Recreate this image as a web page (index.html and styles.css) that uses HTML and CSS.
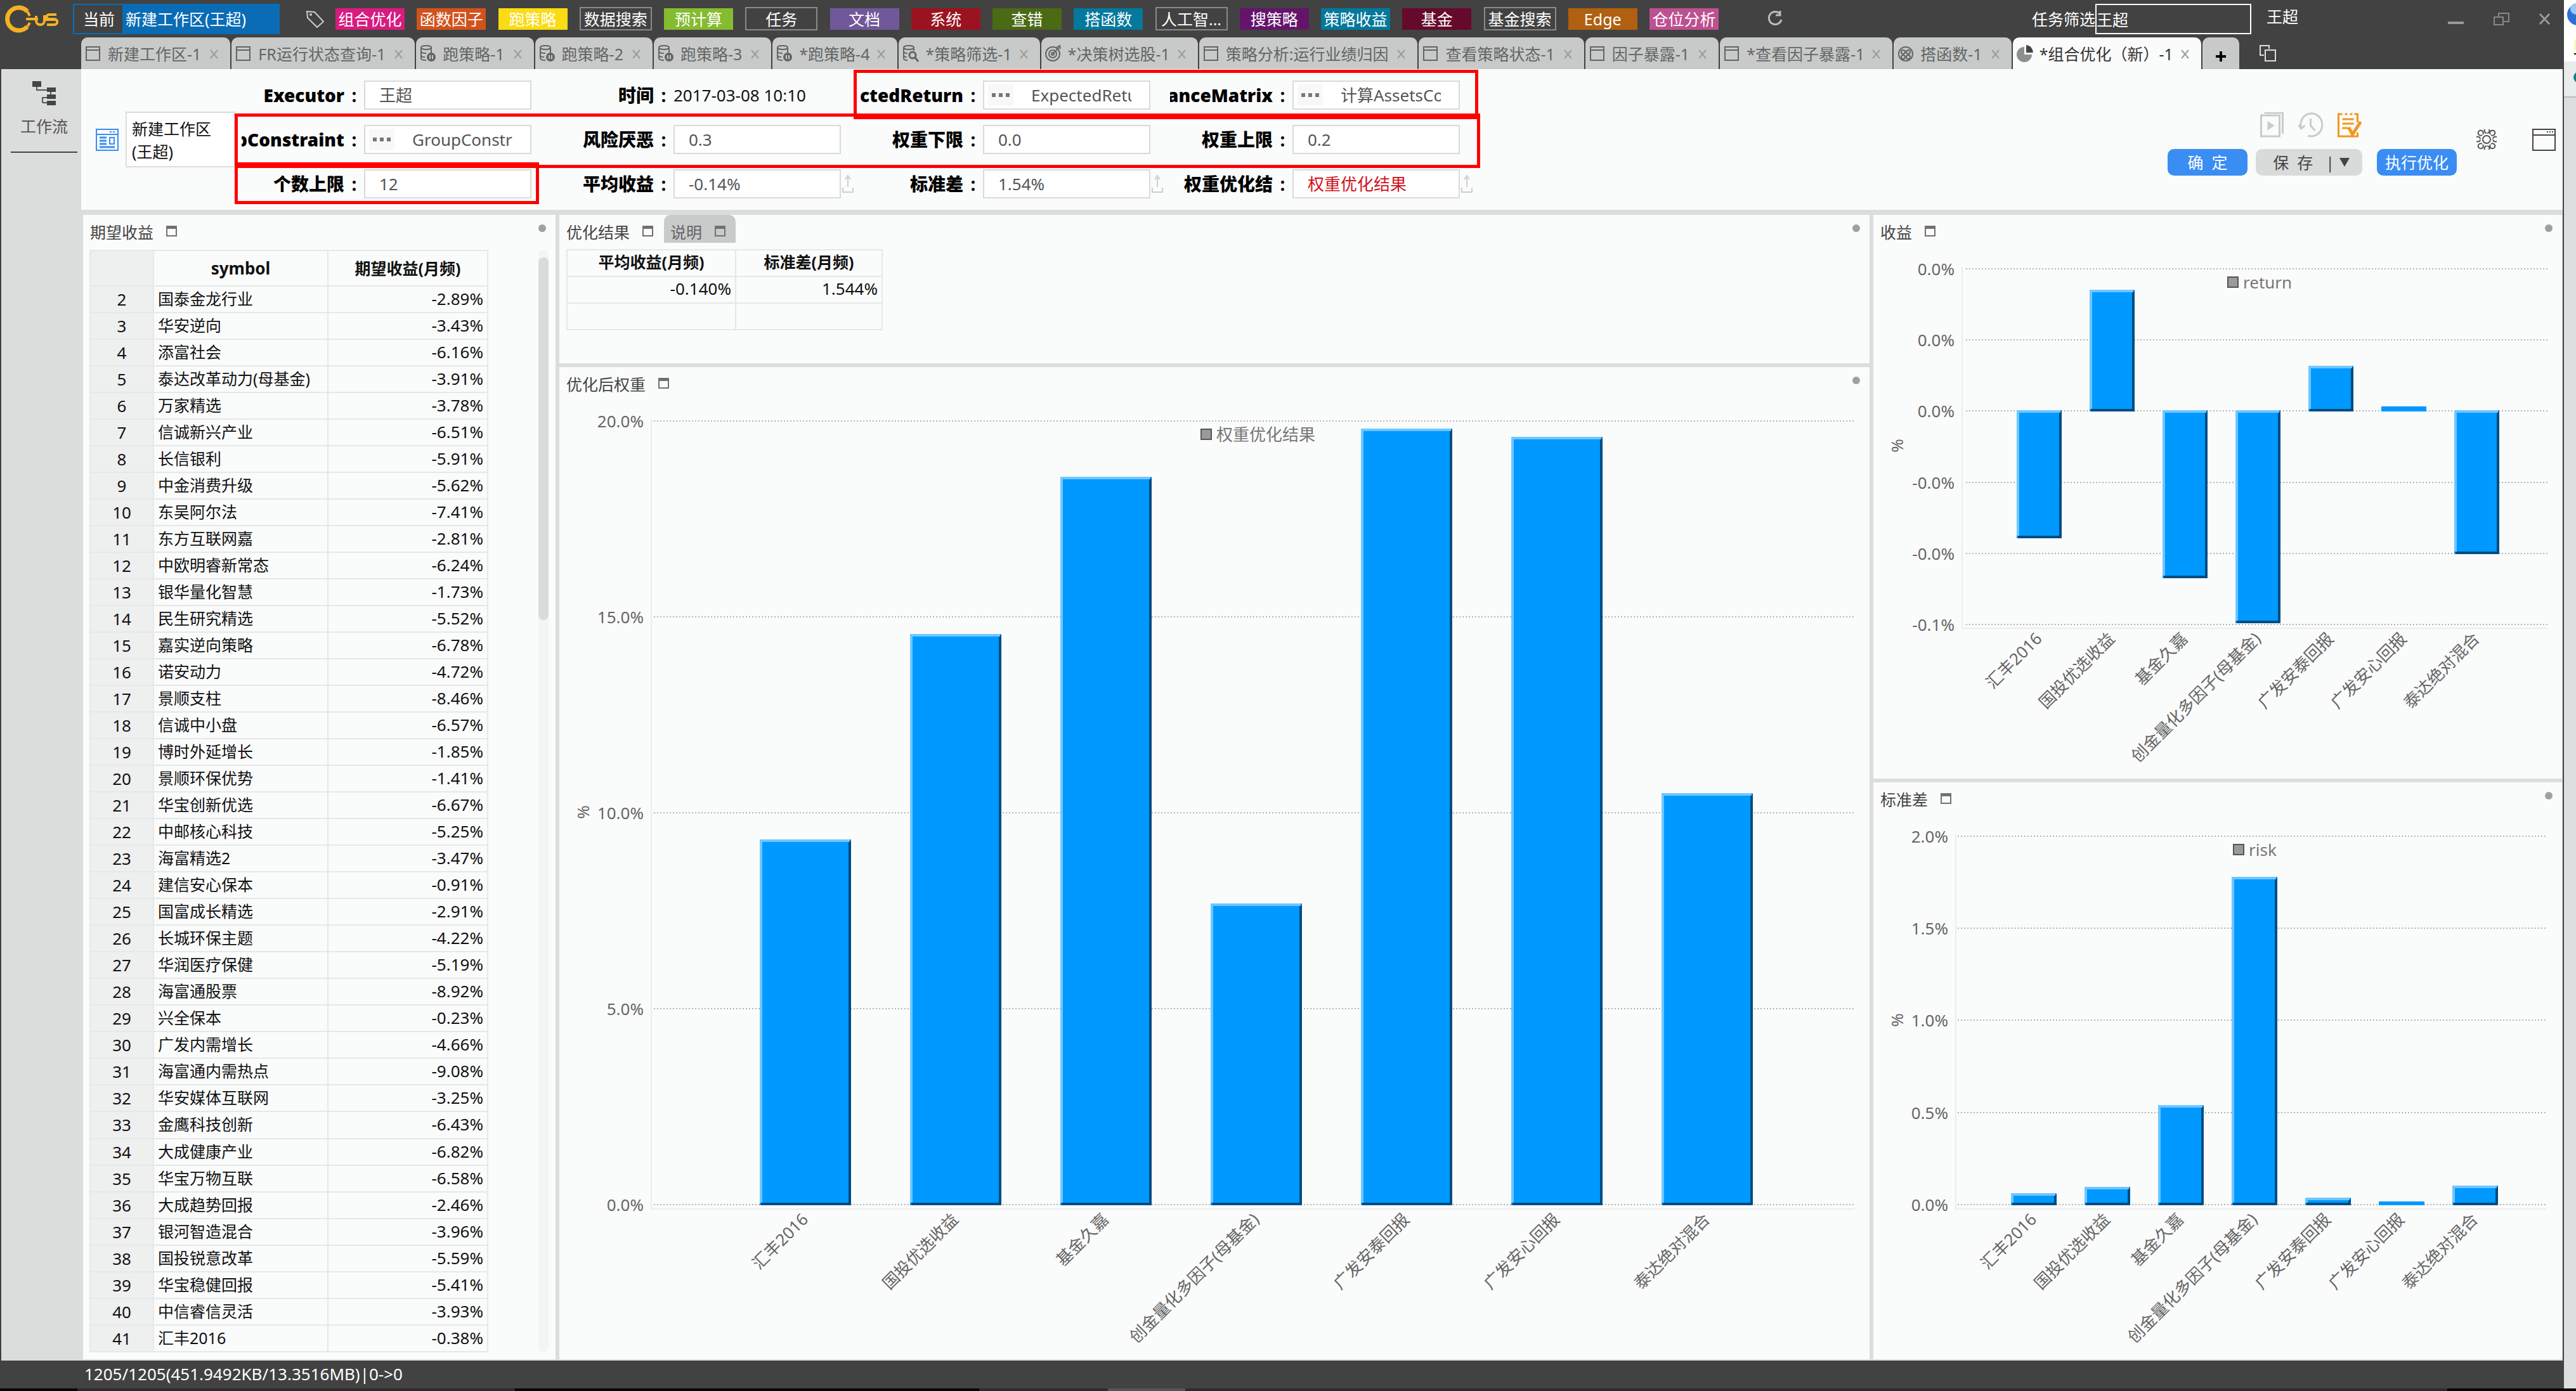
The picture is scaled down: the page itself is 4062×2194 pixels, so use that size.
FILE: index.html
```html
<!DOCTYPE html>
<html lang="zh-CN">
<head>
<meta charset="utf-8">
<title>组合优化（新）-1</title>
<link rel="stylesheet" href="styles.css">
</head>
<body>
<svg class="sprite" width="0" height="0" aria-hidden="true">
  <symbol id="i-win" viewBox="0 0 26 30"><path d="M2 4h21v21H2zM2 9h21" fill="none" stroke="currentColor" stroke-width="2"/></symbol>
  <symbol id="i-db" viewBox="0 0 26 30"><g fill="none" stroke="currentColor" stroke-width="2"><ellipse cx="10" cy="5" rx="8" ry="3"/><path d="M2 5v17c0 2 4 3 8 3M18 5v8M2 11c0 2 4 3 8 3M2 17c0 2 3 3 6 3"/></g><circle cx="18" cy="20" r="7" fill="currentColor"/><path d="M16 17v6M20 17v6" stroke="#c8cac9" stroke-width="2"/></symbol>
  <symbol id="i-find" viewBox="0 0 26 30"><g fill="none" stroke="currentColor" stroke-width="2"><ellipse cx="10" cy="5" rx="8" ry="3"/><path d="M2 5v17c0 2 3 3 6 3M18 5v5M2 11c0 2 3 3 6 3M2 17c0 2 3 3 5 3"/></g><circle cx="16" cy="17" r="5" fill="none" stroke="currentColor" stroke-width="3"/><path d="M20 21l5 6" stroke="currentColor" stroke-width="3"/></symbol>
  <symbol id="i-target" viewBox="0 0 26 30"><g fill="none" stroke="currentColor" stroke-width="2"><circle cx="12" cy="15" r="11"/><circle cx="12" cy="15" r="6"/><circle cx="12" cy="15" r="2"/><path d="M12 15l10-10M18 5l5-3 1 5"/></g></symbol>
  <symbol id="i-fx" viewBox="0 0 26 30"><g fill="none" stroke="currentColor" stroke-width="2"><circle cx="13" cy="15" r="11"/><circle cx="9" cy="12" r="3"/><circle cx="17" cy="12" r="3"/><circle cx="9" cy="20" r="3"/><circle cx="17" cy="20" r="3"/></g></symbol>
  <symbol id="i-pie" viewBox="0 0 26 30"><path d="M12 4a12 12 0 1 0 12 12H12z" fill="#8d8f8f"/><path d="M15 1a12 12 0 0 1 11 12H15z" fill="#444"/></symbol>
  <symbol id="i-x" viewBox="0 0 13 15"><path d="M1 1l11 13M12 1L1 14" stroke="currentColor" stroke-width="2"/></symbol>
  <symbol id="i-up" viewBox="0 0 18 28"><path d="M9 19V4M5 7l4-6 4 6M1 20v7h16v-7" fill="none" stroke="currentColor" stroke-width="2"/></symbol>
</svg>

<div class="desktop">
<div class="window">
  <header class="titlebar">
    <svg class="logo" viewBox="0 0 84 44" fill="none" stroke="#f4b223"><path d="M35 10A18 18 0 1 0 35 34" stroke-width="7"/><path d="M35 10L39 17M35 34L39 28M33 22H52M49 17V25C49 33 62 33 62 25V16M60 23H80M81 15H70C64 15 64 22 70 22H77C84 22 84 31 77 31H66" stroke-width="4"/></svg>
    <label class="workspace"><span class="workspace-tag">当前</span><input value="新建工作区(王超)"></label>
    <svg class="tag-icon" viewBox="0 0 30 28"><path d="M2 2l12 1 14 15-10 9L3 12z" fill="none" stroke="#ccc" stroke-width="2"/><circle cx="8" cy="7" r="2" fill="#ccc"/></svg>
    <nav class="tags">
      <button class="t-pink">组合优化</button><button class="t-orange">函数因子</button><button class="t-yellow">跑策略</button><button class="t-line">数据搜索</button><button class="t-lime">预计算</button><button class="t-line">任务</button><button class="t-violet">文档</button><button class="t-red">系统</button><button class="t-olive">查错</button><button class="t-teal">搭函数</button><button class="t-line">人工智...</button><button class="t-purple">搜策略</button><button class="t-teal">策略收益</button><button class="t-wine">基金</button><button class="t-line">基金搜索</button><button class="t-brown">Edge</button><button class="t-rose">仓位分析</button>
    </nav>
    <button class="bare refresh" aria-label="刷新"><svg width="26" height="28" viewBox="0 0 26 28"><path d="M21 6A10 10 0 1 0 23 15M21 1v7h-7" fill="none" stroke="#bbb" stroke-width="3"/></svg></button>
    <div class="filter"><label for="task">任务筛选</label><input id="task" value="王超"></div>
    <span class="user">王超</span>
    <div class="winctl">
      <button class="bare" aria-label="最小化"><svg width="27" height="20" viewBox="0 0 27 20"><path d="M1 16h25" stroke="#999" stroke-width="4"/></svg></button>
      <button class="bare" aria-label="还原"><svg width="25" height="20" viewBox="0 0 25 20"><path d="M8 7V1h16v13h-8M1 7h14v12H1z" fill="none" stroke="#888" stroke-width="2"/></svg></button>
      <button class="bare" aria-label="关闭"><svg width="19" height="18" viewBox="0 0 19 18"><path d="M2 1l15 16M17 1L2 17" stroke="#999" stroke-width="3"/></svg></button>
    </div>
  </header>

  <nav class="tabs">
    <div class="tab"><svg><use href="#i-win"/></svg><span>新建工作区-1</span><button class="bare" aria-label="关闭"><svg><use href="#i-x"/></svg></button></div>
    <div class="tab"><svg><use href="#i-win"/></svg><span>FR运行状态查询-1</span><button class="bare" aria-label="关闭"><svg><use href="#i-x"/></svg></button></div>
    <div class="tab"><svg><use href="#i-db"/></svg><span>跑策略-1</span><button class="bare" aria-label="关闭"><svg><use href="#i-x"/></svg></button></div>
    <div class="tab"><svg><use href="#i-db"/></svg><span>跑策略-2</span><button class="bare" aria-label="关闭"><svg><use href="#i-x"/></svg></button></div>
    <div class="tab"><svg><use href="#i-db"/></svg><span>跑策略-3</span><button class="bare" aria-label="关闭"><svg><use href="#i-x"/></svg></button></div>
    <div class="tab changed"><svg><use href="#i-db"/></svg><span>*跑策略-4</span><button class="bare" aria-label="关闭"><svg><use href="#i-x"/></svg></button></div>
    <div class="tab changed"><svg><use href="#i-find"/></svg><span>*策略筛选-1</span><button class="bare" aria-label="关闭"><svg><use href="#i-x"/></svg></button></div>
    <div class="tab changed"><svg><use href="#i-target"/></svg><span>*决策树选股-1</span><button class="bare" aria-label="关闭"><svg><use href="#i-x"/></svg></button></div>
    <div class="tab"><svg><use href="#i-win"/></svg><span>策略分析:运行业绩归因</span><button class="bare" aria-label="关闭"><svg><use href="#i-x"/></svg></button></div>
    <div class="tab"><svg><use href="#i-win"/></svg><span>查看策略状态-1</span><button class="bare" aria-label="关闭"><svg><use href="#i-x"/></svg></button></div>
    <div class="tab"><svg><use href="#i-win"/></svg><span>因子暴露-1</span><button class="bare" aria-label="关闭"><svg><use href="#i-x"/></svg></button></div>
    <div class="tab changed"><svg><use href="#i-win"/></svg><span>*查看因子暴露-1</span><button class="bare" aria-label="关闭"><svg><use href="#i-x"/></svg></button></div>
    <div class="tab"><svg><use href="#i-fx"/></svg><span>搭函数-1</span><button class="bare" aria-label="关闭"><svg><use href="#i-x"/></svg></button></div>
    <div class="tab active changed"><svg><use href="#i-pie"/></svg><span>*组合优化（新）-1</span><button class="bare" aria-label="关闭"><svg><use href="#i-x"/></svg></button></div>
    <button class="tab-add" aria-label="新建"><svg width="18" height="18" viewBox="0 0 18 18"><path d="M9 1v16M1 9h16" stroke="#000" stroke-width="4"/></svg></button>
    <button class="bare tab-copy" aria-label="窗口列表"><svg width="26" height="26" viewBox="0 0 26 26"><path d="M7 16H1V1h14v5M9 8h16v17H9z" fill="none" stroke="#ddd" stroke-width="2"/></svg></button>
  </nav>

  <div class="workarea">
    <aside class="sidebar">
      <button class="side-item"><svg width="38" height="40" viewBox="0 0 38 40"><path d="M7 9v6h22M29 16v9M16 35v-8h13M16 35h10" fill="none" stroke="#555" stroke-width="2"/><path d="M0 1h14v9H0zM23 11h14v7H23zM23 22h14v7H23zM23 32h14v7H23z" fill="#444"/></svg><span>工作流</span></button>
    </aside>
    <main>
      <section class="header">
        <svg class="ws-icon" viewBox="0 0 36 35" fill="none" stroke="#3a8df2" stroke-width="2"><path d="M1 1h34v33H1zM1 9h34M22 5h3M27 5h3"/><path d="M6 14h11M6 19h11M6 24h11M6 29h24" stroke-width="3"/><path d="M22 14h7v10h-7z"/></svg>
        <div class="ws-name">新建工作区<br>(王超)</div>
        <form class="params">
          <div class="cell"><label for="f1"><b>Executor</b><i>:</i></label><div class="field"><input id="f1" value="王超"></div></div>
          <div class="cell"><span class="lbl"><b>时间</b><i>:</i></span><time>2017-03-08 10:10</time></div>
          <div class="cell"><label for="f2"><b>ExpectedReturn</b><i>:</i></label><div class="field pick"><button type="button" aria-label="选择"><svg width="29" height="6" viewBox="0 0 29 6"><path d="M0 0h6v6H0zM11 0h6v6h-6zM22 0h6v6h-6z" fill="#777"/></svg></button><input id="f2" value="ExpectedReturn"></div></div>
          <div class="cell"><label for="f3"><b>CovarianceMatrix</b><i>:</i></label><div class="field pick"><button type="button" aria-label="选择"><svg width="29" height="6" viewBox="0 0 29 6"><path d="M0 0h6v6H0zM11 0h6v6h-6zM22 0h6v6h-6z" fill="#777"/></svg></button><input id="f3" value="计算AssetsCov"></div></div>
          <div class="cell"><label for="f4"><b>GroupConstraint</b><i>:</i></label><div class="field pick"><button type="button" aria-label="选择"><svg width="29" height="6" viewBox="0 0 29 6"><path d="M0 0h6v6H0zM11 0h6v6h-6zM22 0h6v6h-6z" fill="#777"/></svg></button><input id="f4" value="GroupConstraint"></div></div>
          <div class="cell"><label for="f5"><b>风险厌恶</b><i>:</i></label><div class="field"><input id="f5" value="0.3"></div></div>
          <div class="cell"><label for="f6"><b>权重下限</b><i>:</i></label><div class="field"><input id="f6" value="0.0"></div></div>
          <div class="cell"><label for="f7"><b>权重上限</b><i>:</i></label><div class="field"><input id="f7" value="0.2"></div></div>
          <div class="cell"><label for="f8"><b>个数上限</b><i>:</i></label><div class="field"><input id="f8" value="12"></div></div>
          <div class="cell"><label for="f9"><b>平均收益</b><i>:</i></label><div class="field"><input id="f9" value="-0.14%"></div><svg class="up"><use href="#i-up"/></svg></div>
          <div class="cell"><label for="f10"><b>标准差</b><i>:</i></label><div class="field"><input id="f10" value="1.54%"></div><svg class="up"><use href="#i-up"/></svg></div>
          <div class="cell"><label for="f11"><b>权重优化结</b><i>:</i></label><div class="field"><input id="f11" class="warn" value="权重优化结果"></div><svg class="up"><use href="#i-up"/></svg></div>
        </form>
        <div class="actions">
          <div class="action-icons">
            <svg viewBox="0 0 38 40" fill="none" stroke="#c9cbcb" stroke-width="3"><path d="M2 5h29v33H2zM7 1h29v33"/><path d="M12 14l11 7-11 8z" fill="#c9cbcb" stroke="none"/></svg>
            <svg viewBox="0 0 38 40" fill="none" stroke="#c9cbcb" stroke-width="3"><path d="M4 25A17 18 0 1 1 15 37M19 10v11l7 8M0 20l4 6 6-5"/></svg>
            <svg viewBox="0 0 38 40" fill="none" stroke="#f0981e" stroke-width="3"><path d="M8 3H2v35h30v-6M32 16V3h-5M12 3h4M20 3h4M8 11h18M8 18h18M8 25h9"/><path d="M18 24l6 11 13-20" stroke-width="5"/></svg>
          </div>
          <div class="action-buttons">
            <button class="primary">确&nbsp; 定</button>
            <button class="save">保&nbsp; 存<span>|</span><svg width="16" height="14" viewBox="0 0 16 14"><path d="M0 0h16L8 14z" fill="#444"/></svg></button>
            <button class="primary run">执行优化</button>
          </div>
        </div>
        <button class="bare gear" aria-label="设置"><svg width="32" height="32" viewBox="0 0 32 32" fill="none" stroke="#555" stroke-width="2"><circle cx="16" cy="16" r="6"/><path d="M16 6a4 4 0 1 1 1 0M16 26a4 4 0 1 0 1 0M6 16a4 4 0 1 1 0-1M26 16a4 4 0 1 0 0-1M9 9a4 4 0 1 1 1-1M23 9a4 4 0 1 0-1-1M9 23a4 4 0 1 0 1 1M23 23a4 4 0 1 1-1 1"/></svg></button>
        <button class="bare max" aria-label="窗口"><svg width="37" height="35" viewBox="0 0 37 35" fill="none" stroke="#444" stroke-width="2"><path d="M1 1h35v33H1zM1 10h35"/><path d="M23 5h2M27 5h2M31 5h2"/></svg></button>
        <div class="mark mark-a"></div><div class="mark mark-b"></div><div class="mark mark-c"></div>
      </section>

      <div class="panels">
        <section class="panel">
          <div class="ptitle"><span>期望收益</span><i class="mx"></i><i class="dot"></i></div>
          <div class="list">
            <table class="returns">
              <thead><tr><th></th><th>symbol</th><th>期望收益(月频)</th></tr></thead>
              <tbody>
<tr><th>2</th><td>国泰金龙行业</td><td>-2.89%</td></tr>
<tr><th>3</th><td>华安逆向</td><td>-3.43%</td></tr>
<tr><th>4</th><td>添富社会</td><td>-6.16%</td></tr>
<tr><th>5</th><td>泰达改革动力(母基金)</td><td>-3.91%</td></tr>
<tr><th>6</th><td>万家精选</td><td>-3.78%</td></tr>
<tr><th>7</th><td>信诚新兴产业</td><td>-6.51%</td></tr>
<tr><th>8</th><td>长信银利</td><td>-5.91%</td></tr>
<tr><th>9</th><td>中金消费升级</td><td>-5.62%</td></tr>
<tr><th>10</th><td>东吴阿尔法</td><td>-7.41%</td></tr>
<tr><th>11</th><td>东方互联网嘉</td><td>-2.81%</td></tr>
<tr><th>12</th><td>中欧明睿新常态</td><td>-6.24%</td></tr>
<tr><th>13</th><td>银华量化智慧</td><td>-1.73%</td></tr>
<tr><th>14</th><td>民生研究精选</td><td>-5.52%</td></tr>
<tr><th>15</th><td>嘉实逆向策略</td><td>-6.78%</td></tr>
<tr><th>16</th><td>诺安动力</td><td>-4.72%</td></tr>
<tr><th>17</th><td>景顺支柱</td><td>-8.46%</td></tr>
<tr><th>18</th><td>信诚中小盘</td><td>-6.57%</td></tr>
<tr><th>19</th><td>博时外延增长</td><td>-1.85%</td></tr>
<tr><th>20</th><td>景顺环保优势</td><td>-1.41%</td></tr>
<tr><th>21</th><td>华宝创新优选</td><td>-6.67%</td></tr>
<tr><th>22</th><td>中邮核心科技</td><td>-5.25%</td></tr>
<tr><th>23</th><td>海富精选2</td><td>-3.47%</td></tr>
<tr><th>24</th><td>建信安心保本</td><td>-0.91%</td></tr>
<tr><th>25</th><td>国富成长精选</td><td>-2.91%</td></tr>
<tr><th>26</th><td>长城环保主题</td><td>-4.22%</td></tr>
<tr><th>27</th><td>华润医疗保健</td><td>-5.19%</td></tr>
<tr><th>28</th><td>海富通股票</td><td>-8.92%</td></tr>
<tr><th>29</th><td>兴全保本</td><td>-0.23%</td></tr>
<tr><th>30</th><td>广发内需增长</td><td>-4.66%</td></tr>
<tr><th>31</th><td>海富通内需热点</td><td>-9.08%</td></tr>
<tr><th>32</th><td>华安媒体互联网</td><td>-3.25%</td></tr>
<tr><th>33</th><td>金鹰科技创新</td><td>-6.43%</td></tr>
<tr><th>34</th><td>大成健康产业</td><td>-6.82%</td></tr>
<tr><th>35</th><td>华宝万物互联</td><td>-6.58%</td></tr>
<tr><th>36</th><td>大成趋势回报</td><td>-2.46%</td></tr>
<tr><th>37</th><td>银河智造混合</td><td>-3.96%</td></tr>
<tr><th>38</th><td>国投锐意改革</td><td>-5.59%</td></tr>
<tr><th>39</th><td>华宝稳健回报</td><td>-5.41%</td></tr>
<tr><th>40</th><td>中信睿信灵活</td><td>-3.93%</td></tr>
<tr><th>41</th><td>汇丰2016</td><td>-0.38%</td></tr>
              </tbody>
            </table>
            <div class="scroll"><div class="thumb"></div></div>
          </div>
        </section>

        <div class="middle">
          <section class="panel">
            <div class="ptitle"><span>优化结果</span><i class="mx"></i><div class="subtab"><span>说明</span><i class="mx"></i></div><i class="dot"></i></div>
            <table class="result">
              <thead><tr><th>平均收益(月频)</th><th>标准差(月频)</th></tr></thead>
              <tbody><tr><td>-0.140%</td><td>1.544%</td></tr><tr><td></td><td></td></tr></tbody>
            </table>
          </section>
          <section class="panel">
            <div class="ptitle"><span>优化后权重</span><i class="mx"></i><i class="dot"></i></div>
            <svg class="chart" id="weight" viewBox="0 0 2066 1507"></svg>
          </section>
        </div>

        <div class="right">
          <section class="panel">
            <div class="ptitle"><span>收益</span><i class="mx"></i><i class="dot"></i></div>
            <svg class="chart" id="return" viewBox="0 0 1086 831"></svg>
          </section>
          <section class="panel">
            <div class="ptitle"><span>标准差</span><i class="mx"></i><i class="dot"></i></div>
            <svg class="chart" id="risk" viewBox="0 0 1086 852"></svg>
          </section>
        </div>
      </div>
    </main>
  </div>
  <footer class="status">1205/1205(451.9492KB/13.3516MB)|0-&gt;0</footer>
</div>
<div class="behind"><svg width="19" height="160" viewBox="0 0 19 160"><rect width="19" height="97" fill="#fff"/><rect y="97" width="19" height="56" fill="#e9ecec"/><path d="M0 153h19" stroke="#b9bcbc" stroke-width="2"/><circle cx="22" cy="23" r="17" fill="#2a6fd6"/><circle cx="19" cy="14" r="9" fill="#9cc8f5"/><path d="M16 62h3v18h-3z" fill="#fdf6b8"/><path d="M16 84h3v2h-3z"/><circle cx="24" cy="122" r="9" fill="#11808c"/></svg></div>
</div>
<div class="taskbar"></div>
<script src="charts.js"></script>
</body>
</html>
```
FILE: styles.css
```css
* { box-sizing: border-box; }
body {
  margin: 0;
  min-height: 100vh;
  display: flex;
  flex-direction: column;
  font: 25px/34px "Noto Sans", "Noto Sans CJK SC", sans-serif;
  color: #111;
  background: #1c1c1c;
}
button, input { font: inherit; color: inherit; margin: 0; padding: 0; border: 0; background: none; }
input { min-width: 0; outline: 0; }
i { font-style: normal; }
svg { display: block; flex: none; }
.sprite { position: absolute; }
.bare { display: block; flex: none; }

.desktop { flex: 1; display: grid; grid-template-columns: minmax(0, 1fr) 19px; }
.window { display: flex; flex-direction: column; background: #424242; padding: 0 2px; }
.behind { background: #dcdedf; }
.taskbar {
  height: 4px;
  background: linear-gradient(90deg, #000 0 3%, #2b2b2b 3% 20%, #000 20% 38%, #2b2b2b 38% 43%, #555 43% 46%, #2b2b2b 46% 95%, #000 95%);
}

/* title bar */
.titlebar { height: 59px; display: flex; align-items: center; padding: 0 19px 0 6px; color: #fff; }
.logo { width: 84px; height: 44px; margin-right: 23px; }
.workspace { display: flex; width: 326px; height: 48px; border: 2px solid #0a6cb5; background: #0a6cb5; }
.workspace-tag { width: 76px; padding-left: 14px; background: #424242; line-height: 44px; }
.workspace input { flex: 1; padding-left: 5px; }
.tag-icon { width: 30px; height: 28px; margin: 0 17px 0 41px; }
.tags { display: flex; justify-content: space-between; align-items: center; width: 2181px; }
.tags button { width: 109px; height: 34px; white-space: nowrap; }
.tags .t-line { width: 114px; height: 37px; border: 2px solid #8a8a8a; line-height: 32px; }
.t-pink { background: #d81b7f; }
.t-orange { background: #d2521c; }
.t-yellow { background: #fbdb14; }
.t-lime { background: #85bb2f; }
.t-violet { background: #71589a; }
.t-red { background: #9b1320; }
.t-olive { background: #4a6a14; }
.t-teal { background: #04799d; }
.t-purple { background: #64156b; }
.t-wine { background: #650a2c; }
.t-brown { background: #b06010; }
.t-rose { background: #bd5091; }
.refresh { margin-left: 76px; }
.filter { display: flex; align-items: center; margin-left: auto; }
.filter input { width: 246px; height: 48px; border: 2px solid #fff; }
.user { margin-left: 24px; padding-bottom: 8px; }
.winctl { display: flex; align-items: center; gap: 46px; margin-left: 235px; }

/* document tabs */
.tabs { height: 50px; display: flex; gap: 2px; padding-left: 126px; }
.tab {
  display: flex;
  align-items: center;
  padding: 2px 19px 0 6px;
  background: #c8cac9;
  border-radius: 10px 10px 0 0;
  color: #636565;
  white-space: nowrap;
}
.tab > svg { width: 26px; height: 30px; margin-right: 10px; }
.tab button { margin-left: 14px; color: #9b9d9d; }
.tab.changed button { margin-left: 12px; }
.tab button svg { width: 13px; height: 15px; }
.tab.active { background: #fafbfb; color: #333; }
.tab-add { width: 58px; display: flex; align-items: center; justify-content: center; padding-top: 10px; background: #c8cac9; border-radius: 10px 10px 0 0; }
.tab-copy { margin-left: 30px; }

/* work area */
.workarea { flex: 1; display: grid; grid-template-columns: 126px minmax(0, 1fr); background: #dbdcdc; }
.sidebar { padding: 18px 6px 0 15px; color: #555; }
.side-item { width: 100%; display: flex; flex-direction: column; align-items: center; gap: 15px; padding-bottom: 23px; border-bottom: 2px solid #444; }
main { display: flex; flex-direction: column; gap: 8px; }

.header { position: relative; height: 222px; display: flex; align-items: center; padding: 0 11px 0 23px; background: #fafbfb; }
.ws-icon { width: 36px; height: 35px; }
.ws-name { width: 173px; height: 88px; margin: 0 10px 0 11px; padding: 7px 8px; border: 2px solid #dcdcdc; background: #fff; line-height: 36px; }
.params { display: grid; grid-template-columns: repeat(4, 488px); grid-auto-rows: 46px; row-gap: 24px; font-size: 26px; }
.cell { display: flex; align-items: center; }
.cell label, .lbl { display: flex; width: 193px; font-size: 28px; font-weight: 700; line-height: 40px; color: #000; white-space: nowrap; }
.cell b { width: 162px; display: flex; justify-content: flex-end; overflow: hidden; }
.cell label i, .lbl i { width: 31px; text-align: center; }
.field { display: flex; align-items: center; width: 264px; height: 46px; padding: 0 28px 0 22px; border: 2px solid #dadada; background: #fff; color: #555; }
.field input { flex: 1; width: 100%; height: 34px; }
.field .warn { color: #d0121b; }
.pick { padding-left: 6px; }
.pick button { width: 40px; height: 34px; display: flex; align-items: center; justify-content: center; margin-right: 28px; background: #f8f8f8; }
.up { width: 18px; height: 28px; margin-left: 2px; color: #cfcfcf; }

.actions { margin-left: auto; padding-top: 14px; }
.action-icons { display: flex; gap: 22px; padding-left: 145px; margin-bottom: 18px; }
.action-icons svg { width: 39px; height: 40px; }
.action-buttons { display: flex; }
.action-buttons button { height: 42px; border-radius: 10px; }
.action-buttons .primary { width: 126px; background: #3a8df2; color: #fff; }
.action-buttons .save { width: 168px; margin: 0 23px 0 13px; display: flex; align-items: center; justify-content: flex-end; padding-right: 20px; background: #d9dada; color: #444; }
.save span { margin: 0 8px 0 20px; }
.gear { margin: 0 56px 0 31px; }

.mark { position: absolute; border: 5px solid #f00; pointer-events: none; }
.mark-a { left: 1218px; top: 1px; width: 985px; height: 78px; }
.mark-b { left: 242px; top: 70px; width: 1964px; height: 86px; }
.mark-c { left: 242px; top: 147px; width: 480px; height: 66px; }

/* panels */
.panels { flex: 1; display: grid; grid-template-columns: minmax(0, 745fr) minmax(0, 2066fr) minmax(0, 1086fr); gap: 6px; padding: 0 1px 2px 3px; }
.middle { display: grid; grid-template-rows: 234px minmax(0, 1fr); gap: 6px; }
.right { display: grid; grid-template-rows: minmax(0, 889fr) minmax(0, 910fr); gap: 6px; }
.panel { display: flex; flex-direction: column; background: #fafbfb; }
.ptitle { display: flex; height: 58px; flex: none; padding: 10px 15px 0 11px; color: #444; }
.mx { width: 17px; height: 17px; margin: 7px 0 0 20px; border: 2px solid #707070; border-top-width: 5px; }
.dot { width: 12px; height: 12px; margin: 5px 0 0 auto; border-radius: 50%; background: #a0a0a0; }
.subtab { display: flex; height: 44px; margin: -10px 0 0 17px; padding: 10px 16px 0 10px; border-radius: 10px 10px 0 0; background: #c9cbcb; color: #666; }

table { border-collapse: collapse; }
th, td { border: 2px solid #e6e7e7; padding: 0; }
.list { flex: 1; display: flex; justify-content: space-between; padding: 0 11px 11px 10px; margin-top: -3px; }
.returns { width: 629px; table-layout: fixed; }
.returns th:first-child { width: 100px; background: #eeefef; font-weight: 400; font-size: 26px; }
.returns thead th { height: 56px; }
.returns thead th:nth-child(2) { width: 275px; font-size: 26px; }
.returns tbody tr { height: 42px; }
.returns td { line-height: 34px; padding: 2px 6px 4px 6px; }
.returns td:last-child { text-align: right; font-size: 26px; }
.scroll { width: 16px; background: #f3f4f4; border-radius: 8px; padding-top: 12px; }
.thumb { height: 572px; background: #d9dada; border-radius: 8px; }
.result { width: 499px; margin: -4px 0 0 11px; table-layout: fixed; }
.result th:first-child { width: 266px; }
.result tr { height: 42px; }
.result th { padding-bottom: 4px; }
.result td { text-align: right; padding: 0 6px 4px 0; font-size: 26px; }

.chart { width: 100%; height: auto; font-size: 26px; }
.chart .grid { stroke: #b4b4b4; stroke-width: 2; stroke-dasharray: 2 3; }
.chart .axis { stroke: #ececec; stroke-width: 2; }
.chart .tick { fill: #666; text-anchor: end; }
.chart .unit { fill: #666; text-anchor: middle; }
.chart .cat { fill: #666; text-anchor: end; }
.chart .name { fill: #777; }
.chart .key { fill: #9a9a9a; stroke: #555; stroke-width: 2; }
.chart .bar { fill: #0099ff; }
.chart .lit { fill: none; stroke: #6fc6ff; stroke-width: 4; }
.chart .shade { fill: none; stroke: #004c80; stroke-width: 4; }

.status { height: 44px; padding: 4px 0 0 131px; color: #fff; font-size: 26px; }
```
FILE: charts.js
```js
const names = ['汇丰2016', '国投优选收益', '基金久嘉', '创金量化多因子(母基金)', '广发安泰回报', '广发安心回报', '泰达绝对混合'];

// Each bar is [top, bottom] in chart units; ticks are [y, label].
const charts = {
  weight: {
    axis: 145, grid: [149, 2043], floor: 1270, unitY: 644, key: [1012, '权重优化结果'], start: 316, pitch: 237, width: 144,
    ticks: [[27, '20.0%'], [336, '15.0%'], [645, '10.0%'], [954, '5.0%'], [1263, '0.0%']],
    bars: [[687, 1264], [363, 1264], [115, 1264], [788, 1264], [39, 1264], [52, 1264], [614, 1264]]
  },
  return: {
    axis: 140, grid: [146, 1065], floor: 594, unitY: 306, key: [559, 'return'], start: 226, pitch: 115, width: 71,
    ticks: [[27, '0.0%'], [139, '0.0%'], [251, '0.0%'], [364, '-0.0%'], [476, '-0.0%'], [588, '-0.1%']],
    bars: [[250, 452], [60, 252], [250, 515], [250, 586], [180, 252], [244, 252], [250, 477]]
  },
  risk: {
    axis: 130, grid: [133, 1062], floor: 615, unitY: 317, key: [568, 'risk'], start: 217, pitch: 116, width: 72,
    ticks: [[27, '2.0%'], [172, '1.5%'], [317, '1.0%'], [463, '0.5%'], [608, '0.0%']],
    bars: [[590, 609], [580, 609], [451, 609], [91, 609], [597, 609], [603, 609], [578, 609]]
  }
};

for (const [id, c] of Object.entries(charts)) {
  let out = `<path class="axis" d="M${c.axis} 24V${c.floor}H${c.grid[1]}" fill="none"/>`;
  for (const [y, label] of c.ticks) {
    out += `<path class="grid" d="M${c.grid[0]} ${y}H${c.grid[1]}"/><text class="tick" x="${c.axis - 12}" y="${y + 10}">${label}</text>`;
  }
  out += `<text class="unit" transform="translate(47 ${c.unitY}) rotate(-90)">%</text>`;
  c.bars.forEach(([top, bottom], i) => {
    const x = c.start + i * c.pitch, r = x + c.width;
    out += `<rect class="bar" x="${x}" y="${top}" width="${c.width}" height="${bottom - top}"/>`;
    if (bottom - top > 10) {
      out += `<path class="shade" d="M${r - 2} ${top + 2}V${bottom - 2}H${x + 2}"/><path class="lit" d="M${x + 2} ${bottom - 4}V${top + 2}H${r - 2}"/>`;
    }
    out += `<text class="cat" transform="translate(${x + c.width / 2 + 6} ${c.floor + 18}) rotate(-45)">${names[i]}</text>`;
  });
  out += `<rect class="key" x="${c.key[0]}" y="40" width="16" height="16"/><text class="name" x="${c.key[0] + 24}" y="58">${c.key[1]}</text>`;
  document.getElementById(id).innerHTML = out;
}
```
